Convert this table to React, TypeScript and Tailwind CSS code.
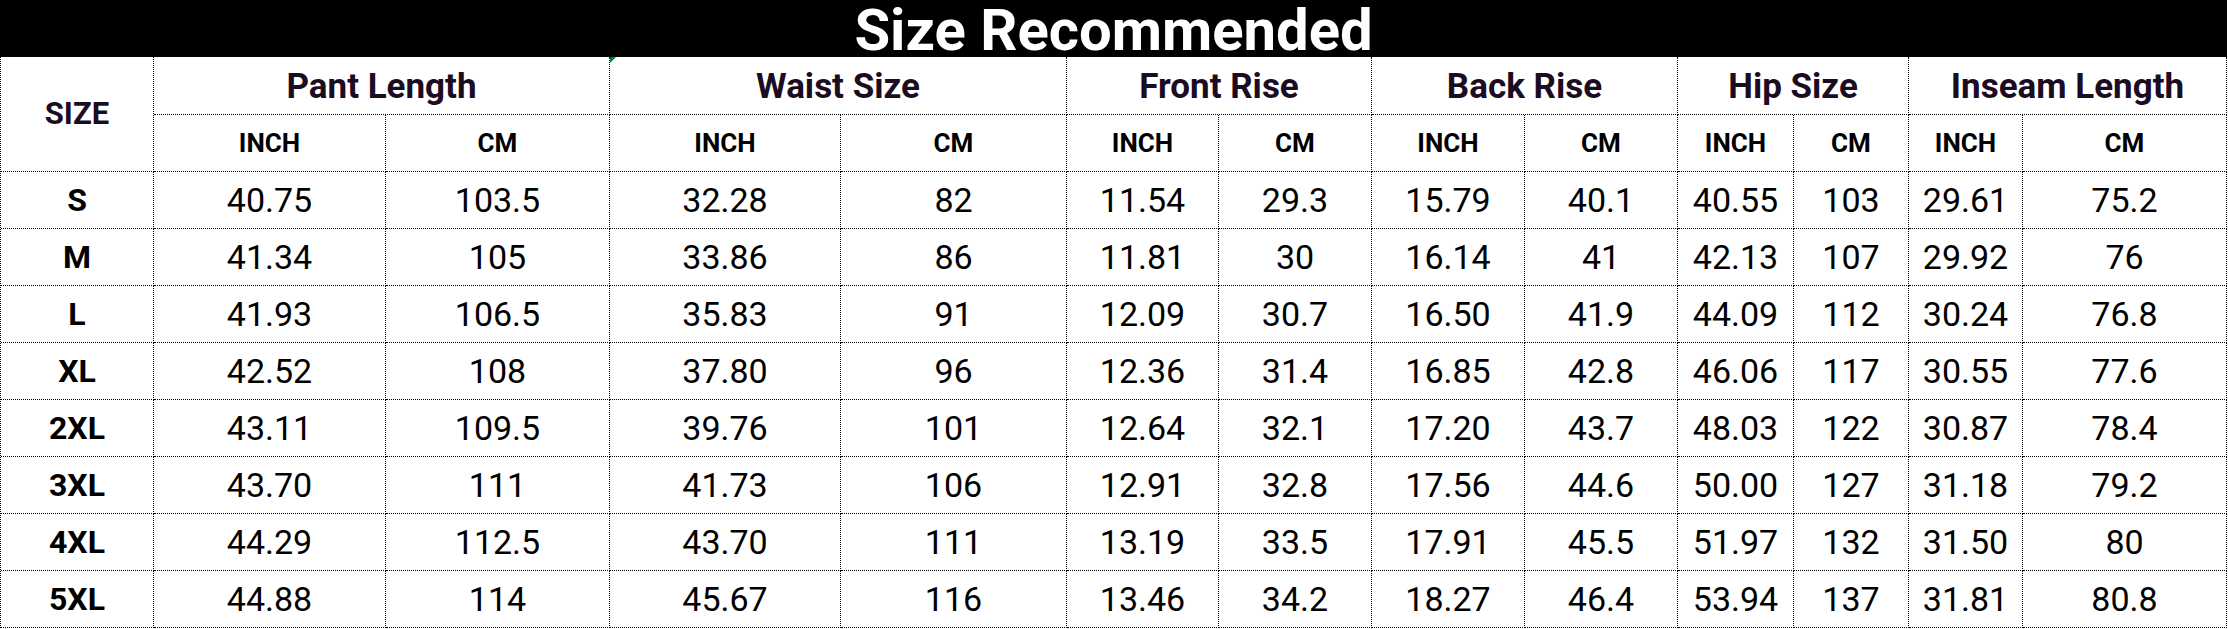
const groups = ["Pant Length", "Waist Size", "Front Rise", "Back Rise", "Hip Size", "Inseam Length"];

const rows = [
  ["S", "40.75", "103.5", "32.28", "82", "11.54", "29.3", "15.79", "40.1", "40.55", "103", "29.61", "75.2"],
  ["M", "41.34", "105", "33.86", "86", "11.81", "30", "16.14", "41", "42.13", "107", "29.92", "76"],
  ["L", "41.93", "106.5", "35.83", "91", "12.09", "30.7", "16.50", "41.9", "44.09", "112", "30.24", "76.8"],
  ["XL", "42.52", "108", "37.80", "96", "12.36", "31.4", "16.85", "42.8", "46.06", "117", "30.55", "77.6"],
  ["2XL", "43.11", "109.5", "39.76", "101", "12.64", "32.1", "17.20", "43.7", "48.03", "122", "30.87", "78.4"],
  ["3XL", "43.70", "111", "41.73", "106", "12.91", "32.8", "17.56", "44.6", "50.00", "127", "31.18", "79.2"],
  ["4XL", "44.29", "112.5", "43.70", "111", "13.19", "33.5", "17.91", "45.5", "51.97", "132", "31.50", "80"],
  ["5XL", "44.88", "114", "45.67", "116", "13.46", "34.2", "18.27", "46.4", "53.94", "137", "31.81", "80.8"],
];

const cell = "flex items-center justify-center border-r border-b border-dotted border-black";

export default function App() {
  return (
    <div className="w-[2227px] bg-white font-['Roboto',sans-serif]">
      {/* title bar */}
      <div className="flex h-[57px] items-center justify-center bg-black">
        <h1 className="pt-[3px] text-[58px] font-bold leading-none text-white">Size Recommended</h1>
      </div>

      <div className="grid grid-cols-[153px_232px_224px_231px_226px_152px_153px_153px_153px_116px_115px_114px_204px] grid-rows-[58px_57px_repeat(8,57px)] border-l border-dotted border-black">
        <div className={`${cell} row-span-2 text-[31px] font-bold text-[#1c0c22]`}>SIZE</div>
        {groups.map((g, i) => (
          <div key={g} className={`${cell} relative col-span-2 pt-[3px] text-[35px] font-bold text-[#1c0c22]`}>
            {i === 1 && (
              <span className="absolute top-0 left-0 h-0 w-0 border-t-[6px] border-r-[6px] border-t-green-700 border-r-transparent" />
            )}
            {g}
          </div>
        ))}
        {groups.map((g) => (
          <>
            <div key={g + "in"} className={`${cell} text-[26px] font-bold text-black`}>INCH</div>
            <div key={g + "cm"} className={`${cell} text-[26px] font-bold text-black`}>CM</div>
          </>
        ))}

        {rows.map((r) =>
          r.map((v, j) => (
            <div
              key={r[0] + j}
              className={`${cell} text-black ${j === 0 ? "text-[32px] font-bold" : "text-[34px]"}`}
            >
              {v}
            </div>
          ))
        )}
      </div>
    </div>
  );
}
